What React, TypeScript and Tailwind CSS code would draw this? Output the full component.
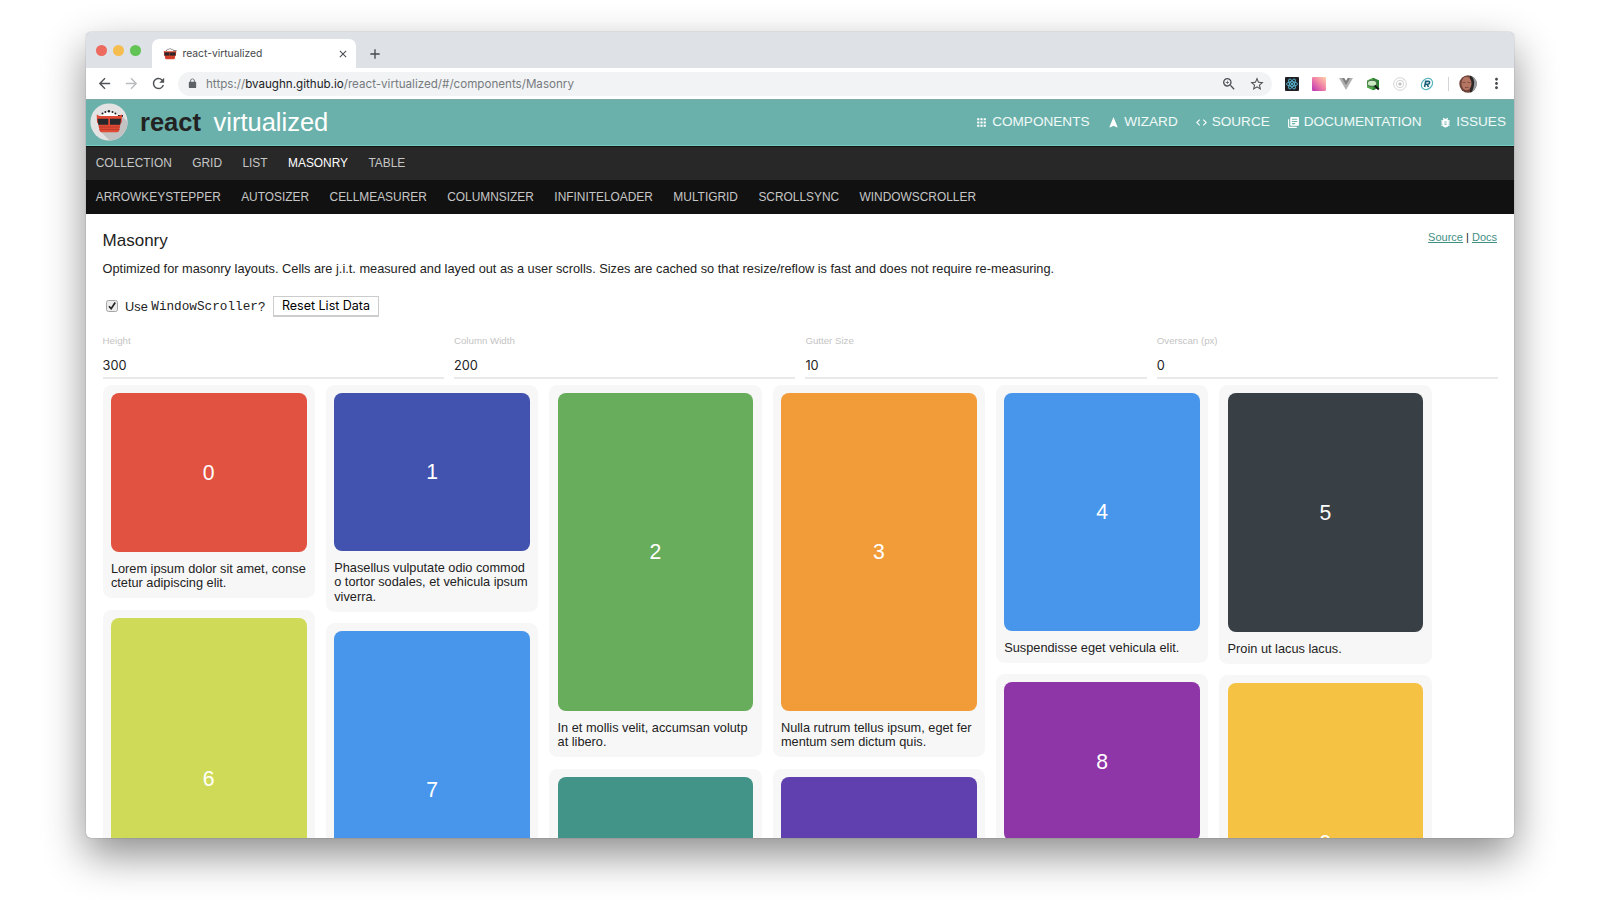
import type { ReactNode } from "react";
import { MdApps, MdCode, MdNavigation, MdRefresh, MdArrowBack, MdArrowForward, MdStarBorder, MdZoomIn, MdMoreVert, MdClose, MdAdd } from "react-icons/md";

type Card = { label: string; color: string; box: string; gap: string; lines: string[] };

const columns: Card[][] = [
  [
    { label: "0", color: "bg-[#e15241]", box: "h-[159px]", gap: "mb-[12px]", lines: ["Lorem ipsum dolor sit amet, conse", "ctetur adipiscing elit."] },
    { label: "6", color: "bg-[#cfda59]", box: "h-[320px]", gap: "", lines: [] },
  ],
  [
    { label: "1", color: "bg-[#4153af]", box: "h-[158px]", gap: "mb-[11.5px]", lines: ["Phasellus vulputate odio commod", "o tortor sodales, et vehicula ipsum", "viverra."] },
    { label: "7", color: "bg-[#4896ec]", box: "h-[317px]", gap: "", lines: [] },
  ],
  [
    { label: "2", color: "bg-[#68ad5b]", box: "h-[318px]", gap: "mb-[11.5px]", lines: ["In et mollis velit, accumsan volutp", "at libero."] },
    { label: "", color: "bg-[#429488]", box: "h-[238px]", gap: "", lines: [] },
  ],
  [
    { label: "3", color: "bg-[#f19c38]", box: "h-[318px]", gap: "mb-[11.5px]", lines: ["Nulla rutrum tellus ipsum, eget fer", "mentum sem dictum quis."] },
    { label: "", color: "bg-[#603fae]", box: "h-[238px]", gap: "", lines: [] },
  ],
  [
    { label: "4", color: "bg-[#4896ec]", box: "h-[238px]", gap: "mb-[11.3px]", lines: ["Suspendisse eget vehicula elit."] },
    { label: "8", color: "bg-[#8e35a8]", box: "h-[158.5px]", gap: "", lines: [] },
  ],
  [
    { label: "5", color: "bg-[#384045]", box: "h-[239px]", gap: "mb-[11px]", lines: ["Proin ut lacus lacus."] },
    { label: "9", color: "bg-[#f5c244]", box: "h-[319px]", gap: "", lines: [] },
  ],
];

function CardView({ card }: { card: Card }) {
  return (
    <div className={`w-[212.35px] shrink-0 rounded-[8.5px] bg-[#f7f7f7] px-[8.3px] pt-[8.3px] pb-[7.7px] ${card.gap}`}>
      <div className={`flex items-center justify-center rounded-[8px] text-[21.2px] text-white ${card.color} ${card.box}`}>{card.label}</div>
      <div className="pt-[9.4px] text-[12.75px] leading-[14.4px] whitespace-nowrap text-[#222]">
        {card.lines.map((l) => (
          <div key={l}>{l}</div>
        ))}
      </div>
    </div>
  );
}

function CableCar({ className }: { className: string }) {
  return (
    <svg viewBox="0 0 28 24" className={className}>
      <g fill="#222">
        <circle cx="6.6" cy="4.6" r="1" /><circle cx="10" cy="2.4" r="1.1" /><circle cx="14" cy="1.6" r="1.1" /><circle cx="18" cy="2.4" r="1.1" /><circle cx="21.4" cy="4.6" r="1" />
        <path d="M22 5h5v1.6h-5z" />
      </g>
      <path d="M1.5 5.5 4 6.5H24l2.5-1L26 12l-1 1-1.4 8q-.3 1.6-2 1.6H6.4q-1.7 0-2-1.6L3 13 2 12z" fill="#d8432e" />
      <path d="M2 8.5h24v7H2z" fill="#b93524" />
      <path d="M3 9h9.8v6H3.5zM14.2 9H25l-.5 6H14.2z" fill="#26282c" />
      <path d="M5 18.5h18v1H5z" fill="#b93524" />
    </svg>
  );
}

function Logo() {
  return (
    <svg viewBox="0 0 38 38" className="mb-px h-[38px] w-[38px] shrink-0">
      <defs><clipPath id="disc"><circle cx="19" cy="19" r="18.6" /></clipPath></defs>
      <g clipPath="url(#disc)">
        <path d="M0 0h38v38H0z" fill="#e3e3e3" />
        <path d="M32 13 44 25 34 44 22 40 10 28z" fill="#c2c2c2" />
      </g>
      <path d="M10.5 13Q19 3.5 28 13z" fill="#fff" />
      <g fill="#222">
        <circle cx="12.5" cy="10.6" r="1" /><circle cx="15.4" cy="9" r="1" /><circle cx="18.9" cy="8.2" r="1.2" /><circle cx="22.5" cy="9" r="1" /><circle cx="25.4" cy="10.6" r="1" />
        <path d="M28 12h5v1.7h-5z" />
      </g>
      <path d="M6.7 11.5 9.5 13H28.5l3.5-1.5-.3 8-1.2 1-1.3 7q-.3 1.7-2 1.7H11.5q-1.7 0-2-1.7l-1.3-7-1.2-1z" fill="#df4a35" />
      <path d="M7.5 15.8H18.3V21.8H8.3zM20 15.8H31l-.8 6H20z" fill="#26282c" />
      <path d="M8.8 24h21M9.5 26.5h20" stroke="#b93a28" strokeWidth=".9" />
    </svg>
  );
}

function LockIcon({ className }: { className: string }) {
  return (
    <svg viewBox="0 0 24 24" className={className} fill="currentColor">
      <path d="M18 8h-1V6c0-2.76-2.24-5-5-5S7 3.240 7 6v2H6c-1.100 0-2 .9-2 2v10c0 1.100.9 2 2 2h12c1.100 0 2-.9 2-2V10c0-1.100-.9-2-2-2zM15.100 8H8.900V6c0-1.710 1.390-3.100 3.100-3.100s3.100 1.390 3.100 3.100z" />
    </svg>
  );
}

function BooksIcon() {
  return (
    <svg viewBox="0 0 24 24" width="13" height="13" fill="currentColor">
      <path d="M4 6H2v14c0 1.100.9 2 2 2h14v-2H4V6zm16-4H8c-1.100 0-2 .9-2 2v12c0 1.100.9 2 2 2h12c1.100 0 2-.9 2-2V4c0-1.100-.9-2-2-2zm-1 9H9V9h10v2zm-4 4H9v-2h6v2zm4-8H9V5h10v2z" />
    </svg>
  );
}

function BugIcon() {
  return (
    <svg viewBox="0 0 24 24" width="13" height="13" fill="currentColor">
      <path d="M20 8h-2.810c-.45-.78-1.070-1.450-1.820-1.960L17 4.410 15.590 3l-2.170 2.170C12.960 5.060 12.490 5 12 5s-.96.060-1.410.170L8.410 3 7 4.410l1.620 1.630C7.880 6.550 7.260 7.220 6.810 8H4v2h2.090c-.050.33-.090.66-.090 1v1H4v2h2v1c0 .34.040.67.090 1H4v2h2.810c1.040 1.790 2.970 3 5.190 3s4.150-1.210 5.190-3H20v-2h-2.090c.050-.33.090-.66.090-1v-1h2v-2h-2v-1c0-.34-.040-.67-.090-1H20V8zm-6 8h-4v-2h4v2zm0-4h-4v-2h4v2z" />
    </svg>
  );
}

function NavLink({ icon, children, className }: { icon: ReactNode; children: ReactNode; className: string }) {
  return (
    <a className={`flex shrink-0 items-center text-[13.6px] leading-none whitespace-nowrap text-[#f0faf8] ${className}`}>
      <span className="mr-[3.5px] flex h-[13px] w-[14px] shrink-0 justify-center text-white">{icon}</span>
      {children}
    </a>
  );
}

function Extensions() {
  return (
    <div className="flex items-center">
      <svg viewBox="0 0 14 14" className="h-[14px] w-[14px]">
        <rect width="14" height="14" rx="1" fill="#1d1f23" />
        <g fill="none" stroke="#61c9e8" strokeWidth=".8">
          <ellipse cx="7" cy="7" rx="5.6" ry="2.2" />
          <ellipse cx="7" cy="7" rx="5.6" ry="2.2" transform="rotate(60 7 7)" />
          <ellipse cx="7" cy="7" rx="5.6" ry="2.2" transform="rotate(120 7 7)" />
        </g>
        <circle cx="7" cy="7" r="1.1" fill="#61c9e8" />
      </svg>
      <svg viewBox="0 0 14 14" className="ml-[13px] h-[14px] w-[14px]">
        <defs>
          <linearGradient id="warm" x1="0" y1="1" x2="1" y2="0"><stop offset="0" stopColor="#b832b4" /><stop offset=".5" stopColor="#f07fa6" /><stop offset="1" stopColor="#ffd3a8" /></linearGradient>
        </defs>
        <rect width="14" height="14" rx="1.2" fill="url(#warm)" />
      </svg>
      <svg viewBox="0 0 14 12" className="ml-[13px] h-[12px] w-[14px]">
        <path d="M0 0h5.2L7 3 8.8 0H14L7 12z" fill="#b2b2b2" />
        <path d="M2.8 0h2.4L7 3 8.8 0h2.4L7 7.2z" fill="#808080" />
      </svg>
      <svg viewBox="0 0 14 14" className="ml-[13px] h-[14px] w-[14px]">
        <path d="M7 .8 13 3.5v7L7 13.3 1 10.5v-7z" fill="#4fa548" />
        <path d="M7 .8 13 3.5v7L7 13.3z" fill="#2f8234" />
        <ellipse cx="6" cy="6.3" rx="4.6" ry="3" fill="#c9ebc0" stroke="#4c6a4c" strokeWidth="1" />
        <path d="m8.8 8.6 4 3.800" stroke="#111" strokeWidth="2" />
      </svg>
      <svg viewBox="0 0 14 14" className="ml-[13px] h-[14px] w-[14px]" fill="none" stroke="#cacaca" strokeWidth=".8">
        <circle cx="7" cy="7" r="6.3" /><circle cx="7" cy="7" r="3.7" /><circle cx="7" cy="7" r="1.3" fill="#bbb" /><path d="M10 3.500 11.500 2" />
      </svg>
      <svg viewBox="0 0 14 14" className="ml-[13px] h-[14px] w-[14px]" fill="none">
        <ellipse cx="7" cy="7" rx="6.200" ry="5" transform="rotate(-45 7 7)" stroke="#5ab5bf" strokeWidth="1.200" />
        <path d="M4.600 10 5.700 4.400H8.500q1.400.1 1.100 1.500T7.700 7.300H5.300M7.200 7.300l1.300 2.700" stroke="#1c5f78" strokeWidth="1.600" />
      </svg>
      <div className="ml-[14px] h-[14px] w-px bg-[#d3d5d8]" />
      <svg viewBox="0 0 18 18" className="ml-[10px] h-[18px] w-[18px]">
        <defs><clipPath id="face"><circle cx="9" cy="9" r="8.700" /></clipPath></defs>
        <g clipPath="url(#face)">
          <path d="M0 0h18v18H0z" fill="#6e4238" />
          <path d="M12 0h6v18h-5z" fill="#999fa5" />
          <path d="M11 0q5 3 4 10t-4 8z" fill="#2e2727" />
          <ellipse cx="7.500" cy="8.500" rx="5" ry="6.800" fill="#b57563" />
          <path d="M3.500 7.500h3M8.500 7.500h3M6 12.500h3.500" stroke="#7d4a3e" strokeWidth=".9" />
        </g>
      </svg>
    </div>
  );
}

function Field({ label, value }: { label: string; value: string }) {
  return (
    <div className="flex h-[44px] w-[341.3px] shrink-0 flex-col border-b-2 border-[#e9e9e9]">
      <div className="text-[9.7px] leading-[11px] whitespace-nowrap text-[#c4c4c4]">{label}</div>
      <div className="pt-[12.5px] font-[Inter,sans-serif] text-[12.75px] leading-[16px] text-[#222]">{value}</div>
    </div>
  );
}

const primary = ["COLLECTION", "GRID", "LIST", "MASONRY", "TABLE"];
const secondary = ["ARROWKEYSTEPPER", "AUTOSIZER", "CELLMEASURER", "COLUMNSIZER", "INFINITELOADER", "MULTIGRID", "SCROLLSYNC", "WINDOWSCROLLER"];

export default function App() {
  return (
    <div className="h-[900px] w-[1600px] overflow-hidden bg-white pt-[32px] pl-[86px] font-['Liberation_Sans',Arial,sans-serif]">
      <div className="flex h-[806px] w-[1428px] flex-col overflow-hidden rounded-[5px] bg-white shadow-[0_0_1px_rgba(0,0,0,0.6),0_17px_42px_rgba(0,0,0,0.45)]">
        <div className="flex h-[36px] shrink-0 bg-[#dee1e6] pl-[10px] font-[Inter,sans-serif]">
          <div className="flex items-center gap-[6px] pt-px">
            <i className="h-[11px] w-[11px] rounded-full bg-[#ed6a5e]" />
            <i className="h-[11px] w-[11px] rounded-full bg-[#f5bd4f]" />
            <i className="h-[11px] w-[11px] rounded-full bg-[#61c454]" />
          </div>
          <div className="mt-[7px] ml-[11px] flex h-[29px] w-[204px] items-center rounded-t-[7px] bg-white pl-[10.5px] text-[#45484c]">
            <CableCar className="h-[12px] w-[14px]" />
            <span className="ml-[6px] text-[10.3px] whitespace-nowrap">react-virtualized</span>
            <MdClose className="mr-[7.5px] ml-auto h-[12px] w-[12px]" />
          </div>
          <MdAdd className="mt-[13.5px] ml-[11px] h-[16px] w-[16px] text-[#45484c]" />
        </div>
        <div className="flex h-[31px] shrink-0 items-center bg-white font-[Inter,sans-serif]">
          <MdArrowBack className="ml-[9.5px] h-[17px] w-[17px] text-[#505357]" />
          <MdArrowForward className="ml-[10px] h-[17px] w-[17px] text-[#b9bbbe]" />
          <MdRefresh className="ml-[10px] h-[17px] w-[17px] text-[#505357]" />
          <div className="ml-[11.5px] flex h-[24px] w-[1094px] items-center rounded-full bg-[#f1f3f4]">
            <LockIcon className="ml-[9px] h-[11px] w-[11px] text-[#5f6368]" />
            <span className="ml-[8px] pt-[2px] text-[11.62px] whitespace-nowrap text-[#777b80]">
              https://<span className="text-[#202124]">bvaughn.github.io</span>/react-virtualized/#/components/Masonry
            </span>
            <MdZoomIn className="ml-auto h-[16px] w-[16px] text-[#505357]" />
            <MdStarBorder className="mr-[7.5px] ml-[11.5px] h-[16px] w-[16px] text-[#505357]" />
          </div>
          <div className="ml-[13px]"><Extensions /></div>
          <MdMoreVert className="ml-[10.5px] h-[17px] w-[17px] text-[#45484c]" />
        </div>
        <header className="flex h-[47px] shrink-0 items-center border-t border-b border-t-[#7fa9a5] border-b-[#6fcdc3] bg-[#6bb1ab] pl-[3.5px]">
          <Logo />
          <div className="ml-[12.5px] flex pt-px text-[25.5px] leading-none whitespace-nowrap">
            <b className="w-[73.5px] text-[#222]">react</b>
            <span className="text-white">virtualized</span>
          </div>
          <nav className="ml-auto flex items-center pr-[8px] pb-px">
            <NavLink icon={<MdApps size={13} />} className="w-[132px]">COMPONENTS</NavLink>
            <NavLink icon={<MdNavigation size={13} />} className="w-[87.5px]">WIZARD</NavLink>
            <NavLink icon={<MdCode size={13} />} className="w-[92px]">SOURCE</NavLink>
            <NavLink icon={<BooksIcon />} className="w-[152.5px]">DOCUMENTATION</NavLink>
            <NavLink icon={<BugIcon />} className="">ISSUES</NavLink>
          </nav>
        </header>
        <nav className="flex h-[33.5px] shrink-0 items-center gap-[20.45px] border-t border-[#151515] bg-[#282828] pt-[1.5px] pl-[9.7px] text-[11.92px] text-[#c6c6c6]">
          {primary.map((t) => (
            <a key={t} className={t === "MASONRY" ? "text-white" : ""}>{t}</a>
          ))}
        </nav>
        <nav className="flex h-[34px] shrink-0 items-center gap-[20.45px] bg-[#111] pt-[2px] pl-[9.7px] text-[11.92px] text-[#c6c6c6]">
          {secondary.map((t) => (
            <a key={t}>{t}</a>
          ))}
        </nav>
        <main className="flex flex-col pt-[17px] pl-[16.6px] text-[#222]">
          <div className="flex h-[30px] justify-between pr-[17px]">
            <h1 className="text-[17px] leading-[20px]">Masonry</h1>
            <div className="text-[11px] leading-[12px]">
              <a className="text-[#3f8f85] underline">Source</a> | <a className="text-[#3f8f85] underline">Docs</a>
            </div>
          </div>
          <p className="text-[12.77px] leading-[15px] whitespace-nowrap">
            Optimized for masonry layouts. Cells are j.i.t. measured and layed out as a user scrolls. Sizes are cached so that resize/reflow is fast and does not require re-measuring.
          </p>
          <div className="mt-[20px] flex h-[21px] items-center text-[12.75px] whitespace-nowrap">
            <svg viewBox="0 0 12 12" className="ml-[3.5px] h-[12px] w-[12px]">
              <rect x=".5" y=".5" width="11" height="11" rx="2" fill="#ececec" stroke="#a5a5a5" />
              <path d="M3 6.2 5.2 8.7 9.2 2.5" fill="none" stroke="#222" strokeWidth="1.7" />
            </svg>
            <span className="ml-[7px] pt-px">Use</span>
            <code className="ml-[3.5px] pt-[2px] font-['Liberation_Mono',monospace] text-[12.7px]">WindowScroller</code>
            <span className="pt-px">?</span>
            <button className="ml-[8px] h-[21px] w-[106px] border border-b-2 border-[#ccc] bg-white pt-px font-[Inter,sans-serif] text-[12.5px] leading-none text-black">Reset List Data</button>
          </div>
          <div className="mt-[18px] flex gap-[10.1px]">
            <Field label="Height" value="300" />
            <Field label="Column Width" value="200" />
            <Field label="Gutter Size" value="10" />
            <Field label="Overscan (px)" value="0" />
          </div>
          <div className="mt-[6.5px] flex gap-[11px]">
            {columns.map((col, i) => (
              <div key={i} className="flex w-[212.35px] shrink-0 flex-col">
                {col.map((c) => (
                  <CardView key={c.color} card={c} />
                ))}
              </div>
            ))}
          </div>
        </main>
      </div>
    </div>
  );
}
